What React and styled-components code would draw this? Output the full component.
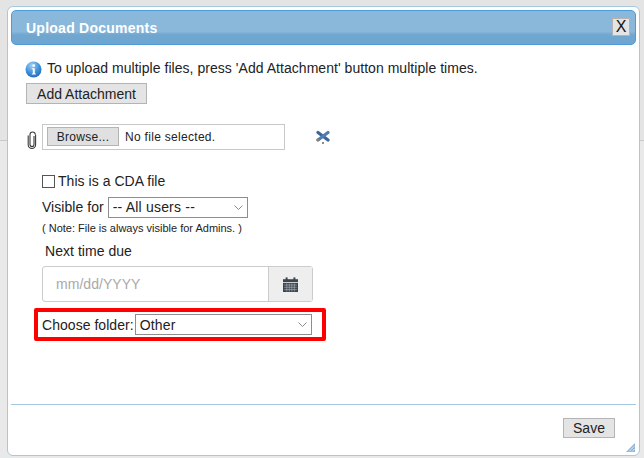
import React from 'react'
import styled, { createGlobalStyle } from 'styled-components'

const Global = createGlobalStyle`
html, body {
  margin: 0;
  padding: 0;
  height: 100%;
  overflow: hidden;
}
body {
  font-family: 'Liberation Sans', Arial, sans-serif;
  color: #222;
}
`

function InfoIcon() {
  return (
    <svg width="17" height="17" viewBox="0 0 17 17">
      <defs>
        <radialGradient id="inf" cx="40%" cy="25%" r="85%">
          <stop offset="0" stopColor="#9fd0f5" />
          <stop offset="0.55" stopColor="#3f8fd8" />
          <stop offset="1" stopColor="#1c62b4" />
        </radialGradient>
      </defs>
      <circle cx="8.5" cy="8.5" r="8" fill="url(#inf)" />
      <circle cx="8.7" cy="4.6" r="1.4" fill="#fff" />
      <path d="M6.8 7.2h3v5.2h1v1.1H6.8v-1.1h1V8.3h-1z" fill="#fff" />
    </svg>
  )
}

function ClipIcon() {
  return (
    <svg width="12" height="18" viewBox="0 0 12 18" fill="none" stroke="#3a3a3a" strokeWidth="1.1">
      <path d="M8 5v8.5a2 2 0 0 1-4 0V3.6a2.6 2.6 0 0 1 5.2 0" />
      <path d="M9.6 3.5v10.2a3.7 3.7 0 0 1-7.4 0V4.5" />
    </svg>
  )
}

function RemoveIcon() {
  return (
    <RemoveSvg width="16" height="15" viewBox="0 0 16 15">
      <path d="M3 3.5 L13 11" stroke="#3f6496" strokeWidth="3.2" strokeLinecap="round" />
      <path d="M13 3.5 L3 11" stroke="#4f7db5" strokeWidth="3.2" strokeLinecap="round" />
      <circle cx="2.6" cy="10.8" r="1.2" fill="#b5793f" />
      <circle cx="8" cy="14" r="0.9" fill="#555" />
    </RemoveSvg>
  )
}

function CalendarIcon() {
  return (
    <svg width="15" height="15" viewBox="0 0 15 15">
      <path d="M0 2.2h15V5H0z" fill="#3d4650" />
      <rect x="2.6" y="0.4" width="2" height="2.6" fill="#3d4650" />
      <rect x="10.4" y="0.4" width="2" height="2.6" fill="#3d4650" />
      <rect x="0" y="5.8" width="15" height="9.2" fill="#3d4650" />
      <path d="M1.2 8h12.6M1.2 10.3h12.6M1.2 12.6h12.6M3.8 6.5v8M6.3 6.5v8M8.8 6.5v8M11.3 6.5v8" stroke="#aeb4ba" strokeWidth="0.6" />
    </svg>
  )
}

function Chevron() {
  return (
    <svg width="9" height="5" viewBox="0 0 9 5" fill="none" stroke="#8a8a8a" strokeWidth="1">
      <path d="M.5.5l4 4 4-4" />
    </svg>
  )
}

export default function App() {
  return (
    <>
      <Global />
      <Backdrop>
        <Dialog>
          <Header>
            <Title>Upload Documents</Title>
            <CloseButton>X</CloseButton>
          </Header>
          <Body>
            <Hint>
              <InfoIcon />
              <span>To upload multiple files, press 'Add Attachment' button multiple times.</span>
            </Hint>
            <AddButton>Add Attachment</AddButton>
            <FileRow>
              <ClipIcon />
              <FileBox>
                <BrowseButton>Browse...</BrowseButton>
                <FileName>No file selected.</FileName>
              </FileBox>
              <RemoveSlot><RemoveIcon /></RemoveSlot>
            </FileRow>
            <Options>
              <CheckRow>
                <Checkbox />
                <span>This is a CDA file</span>
              </CheckRow>
              <VisibleRow>
                <span>Visible for</span>
                <SelectBox $width={140}>
                  <span>-- All users --</span>
                  <Chevron />
                </SelectBox>
              </VisibleRow>
              <Note>( Note: File is always visible for Admins. )</Note>
              <DueLabel>Next time due</DueLabel>
              <DateGroup>
                <DateInput>mm/dd/YYYY</DateInput>
                <DateAddon><CalendarIcon /></DateAddon>
              </DateGroup>
            </Options>
            <FolderRow>
              <span>Choose folder:</span>
              <SelectBox $width={177}>
                <span>Other</span>
                <Chevron />
              </SelectBox>
            </FolderRow>
          </Body>
          <Footer>
            <SaveButton>Save</SaveButton>
            <Grip viewBox="0 0 9 9" width="9" height="9">
              <path d="M9 0v9H0z" fill="#8fb4dc" />
              <path d="M3 8.5l5.5-5.5M6 8.5l2.5-2.5" stroke="#fff" strokeWidth="0.7" />
            </Grip>
          </Footer>
        </Dialog>
      </Backdrop>
    </>
  )
}

const Backdrop = styled.div`
width: 644px;
height: 458px;
box-sizing: border-box;
padding: 6px 4px 2px 7px;
display: flex;
background: linear-gradient(to bottom, #e4e4e4 140px, #c9c9c9 140px, #c9c9c9 141px, #e9e9e9 141px);
`

const Dialog = styled.div`
flex: 1;
box-sizing: border-box;
display: flex;
flex-direction: column;
padding: 3px;
background: #fff;
border: 1px solid #a6c9e2;
border-radius: 6px;
`

const Header = styled.div`
height: 35px;
flex: none;
box-sizing: border-box;
display: flex;
align-items: center;
justify-content: space-between;
padding: 0 5px 0 14px;
border: 1px solid #4f9ad9;
border-radius: 5px;
background: linear-gradient(to bottom, #8ab8db 0, #8ab8db 62%, #70a7d1 72%, #6fa6d0 100%);
`

const Title = styled.div`
font-size: 14px;
font-weight: bold;
letter-spacing: 0.25px;
color: #fff;
`

const Chrome = styled.button`
font-family: 'Liberation Sans', Arial, sans-serif;
color: #222;
background: #e4e4e4;
border: 1px solid #b4b4b4;
border-radius: 0;
padding: 0;
box-sizing: border-box;
`

const CloseButton = styled(Chrome)`
width: 18px;
height: 18px;
margin: -1px 0 0;
font-size: 16px;
line-height: 16px;
color: #111;
`

const Body = styled.div`
flex: 1;
display: flex;
flex-direction: column;
align-items: flex-start;
padding: 14px 0 0 15px;
font-size: 14px;
letter-spacing: 0.04px;
`

const Hint = styled.div`
height: 18px;
display: flex;
align-items: center;
gap: 5px;
margin-left: -1px;

svg {
  margin-top: 3px;
}
`

const AddButton = styled(Chrome)`
width: 121px;
height: 21px;
margin-top: 6px;
font-size: 14px;
`

const FileRow = styled.div`
display: flex;
align-items: center;
margin-top: 19px;
height: 27px;

svg:first-child {
  margin-top: 7px;
}
`

const FileBox = styled.div`
width: 243px;
height: 26px;
box-sizing: border-box;
margin-left: 4px;
display: flex;
align-items: center;
padding: 0 4px;
border: 1px solid #c8c8c8;
`

const BrowseButton = styled(Chrome)`
width: 72px;
height: 19px;
font-size: 12px;
letter-spacing: 0.3px;
background: #e0e0e0;
`

const FileName = styled.span`
margin-left: 6px;
font-size: 12px;
letter-spacing: 0.3px;
`

const RemoveSlot = styled.div`
margin: -8px 0 0 30px;
display: flex;
`

const RemoveSvg = styled.svg`
filter: blur(0.7px);
`

const Options = styled.div`
display: flex;
flex-direction: column;
align-items: flex-start;
margin: 22px 0 0 16px;
`

const CheckRow = styled.label`
display: flex;
align-items: center;
gap: 3px;
height: 18px;
`

const Checkbox = styled.span`
width: 11px;
height: 11px;
border: 1px solid #555;
background: #fff;
`

const VisibleRow = styled.div`
display: flex;
align-items: center;
gap: 4px;
margin-top: 6px;
height: 22px;
`

const SelectBox = styled.div`
width: ${p => p.$width}px;
height: 21px;
box-sizing: border-box;
display: flex;
align-items: center;
justify-content: space-between;
padding: 0 4px 0 4px;
letter-spacing: 0.2px;
background: #fff;
border: 1px solid #8e8e8e;
`

const Note = styled.div`
font-size: 11px;
letter-spacing: 0;
margin-top: 4px;
height: 12px;
line-height: 12px;
`

const DueLabel = styled.div`
margin: 9px 0 0 3px;
height: 16px;
line-height: 16px;
`

const DateGroup = styled.div`
display: flex;
width: 271px;
height: 36px;
margin-top: 7px;
box-sizing: border-box;
border: 1px solid #ccc;
border-radius: 3px;
`

const DateInput = styled.div`
flex: 1;
display: flex;
align-items: center;
padding-left: 13px;
color: #a9a9a9;
`

const DateAddon = styled.div`
width: 43px;
display: flex;
align-items: center;
justify-content: center;
background: #eee;
border-left: 1px solid #ccc;
`

const FolderRow = styled.div`
width: 292px;
height: 33px;
box-sizing: border-box;
margin: 6px 0 0 8px;
display: flex;
align-items: center;
gap: 1px;
padding-left: 4px;
border: 4px solid #f00;
border-radius: 2px;
`

const Footer = styled.div`
position: relative;
height: 48px;
box-sizing: border-box;
flex: none;
display: flex;
align-items: flex-start;
justify-content: flex-end;
padding: 13px 21px 0 0;
border-top: 1px solid #a6c9e2;
`

const SaveButton = styled(Chrome)`
width: 52px;
height: 20px;
font-size: 14px;
`

const Grip = styled.svg`
position: absolute;
right: 1px;
bottom: 0;
`
